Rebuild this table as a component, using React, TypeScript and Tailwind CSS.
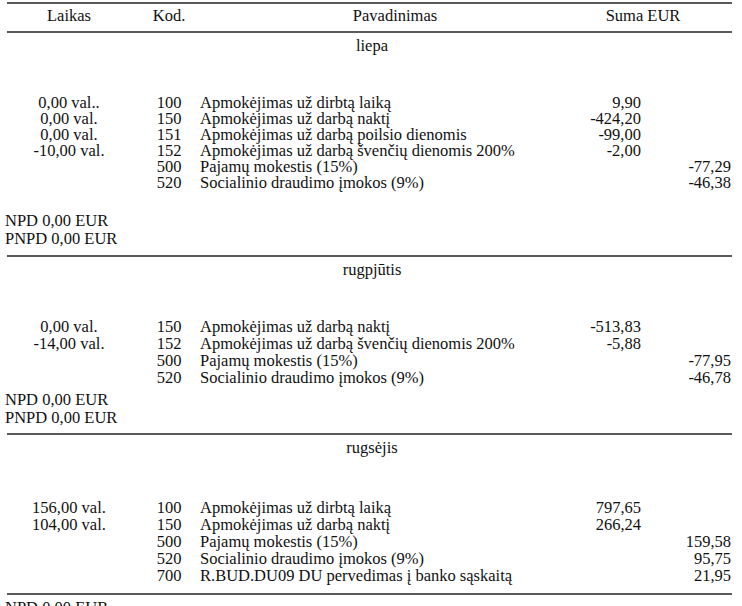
import React from "react";

type Row = {
  time?: string;
  code: string;
  name: string;
  sum1?: string;
  sum2?: string;
};

interface Section {
  month: string;
  rows: Row[];
  gapTop: string;
  rowH: string;
  gapNpd: string;
  gapRule: string;
  footer: boolean;
}

const sections: Section[] = [
  {
    month: "liepa",
    gapTop: "mt-[36px]",
    rowH: "h-[16px] leading-[16px]",
    gapNpd: "mt-[21px]",
    gapRule: "mt-[7px]",
    footer: true,
    rows: [
      { time: "0,00 val..", code: "100", name: "Apmokėjimas už dirbtą laiką", sum1: "9,90" },
      { time: "0,00 val.", code: "150", name: "Apmokėjimas už darbą naktį", sum1: "-424,20" },
      { time: "0,00 val.", code: "151", name: "Apmokėjimas už darbą poilsio dienomis", sum1: "-99,00" },
      { time: "-10,00 val.", code: "152", name: "Apmokėjimas už darbą švenčių dienomis 200%", sum1: "-2,00" },
      { code: "500", name: "Pajamų mokestis (15%)", sum2: "-77,29" },
      { code: "520", name: "Socialinio draudimo įmokos (9%)", sum2: "-46,38" },
    ],
  },
  {
    month: "rugpjūtis",
    gapTop: "mt-[35px]",
    rowH: "h-[17px] leading-[17px]",
    gapNpd: "mt-[5px]",
    gapRule: "mt-[6px]",
    footer: true,
    rows: [
      { time: "0,00 val.", code: "150", name: "Apmokėjimas už darbą naktį", sum1: "-513,83" },
      { time: "-14,00 val.", code: "152", name: "Apmokėjimas už darbą švenčių dienomis 200%", sum1: "-5,88" },
      { code: "500", name: "Pajamų mokestis (15%)", sum2: "-77,95" },
      { code: "520", name: "Socialinio draudimo įmokos (9%)", sum2: "-46,78" },
    ],
  },
  {
    month: "rugsėjis",
    gapTop: "mt-[38px]",
    rowH: "h-[17px] leading-[17px]",
    gapNpd: "mt-[0px]",
    gapRule: "mt-[9px]",
    footer: false,
    rows: [
      { time: "156,00 val.", code: "100", name: "Apmokėjimas už dirbtą laiką", sum1: "797,65" },
      { time: "104,00 val.", code: "150", name: "Apmokėjimas už darbą naktį", sum1: "266,24" },
      { code: "500", name: "Pajamų mokestis (15%)", sum2: "159,58" },
      { code: "520", name: "Socialinio draudimo įmokos (9%)", sum2: "95,75" },
      { code: "700", name: "R.BUD.DU09 DU pervedimas į banko sąskaitą", sum2: "21,95" },
    ],
  },
];

const Rule = () => <div className="ml-[7px] w-[725px] h-[2px] bg-[#5a5a5a]" />;

const Npd = ({ className = "" }: { className?: string }) => (
  <div className={"pl-[5px] " + className}>
    <div className="h-[18px] leading-[18px]">NPD 0,00 EUR</div>
    <div className="h-[18px] leading-[18px]">PNPD 0,00 EUR</div>
  </div>
);

export default function App() {
  return (
    <div
      className="w-[742px] h-[606px] overflow-hidden bg-white text-[#111111] text-[16.5px]"
      style={{ fontFamily: '"Liberation Serif", "Times New Roman", serif' }}
    >
      <div className="h-[2px]" />
      <Rule />
      {/* antraštė */}
      <div className="flex h-[27px] items-center pb-[3px] leading-[20px]">
        <div className="w-[138px] text-center">Laikas</div>
        <div className="w-[62px] text-center">Kod.</div>
        <div className="w-[390px] text-center">Pavadinimas</div>
        <div className="w-[106px] text-center">Suma EUR</div>
      </div>
      <Rule />

      {sections.map((s, si) => (
        <div key={si}>
          <div className="flex h-[26px] items-center leading-[20px]">
            <div className="ml-[200px] w-[344px] text-center">{s.month}</div>
          </div>
          <div className={s.gapTop}>
            {s.rows.map((r, i) => (
              <div key={i} className={"flex items-center whitespace-nowrap " + s.rowH}>
                <div className="w-[138px] text-center">{r.time}</div>
                <div className="w-[62px] text-center">{r.code}</div>
                <div className="w-[340px]">{r.name}</div>
                <div className="w-[101px] text-right">{r.sum1}</div>
                <div className="w-[90px] text-right">{r.sum2}</div>
              </div>
            ))}
          </div>
          {s.footer && <Npd className={s.gapNpd} />}
          <div className={s.gapRule}>
            <Rule />
          </div>
        </div>
      ))}
      <Npd className="mt-[4px]" />
    </div>
  );
}
